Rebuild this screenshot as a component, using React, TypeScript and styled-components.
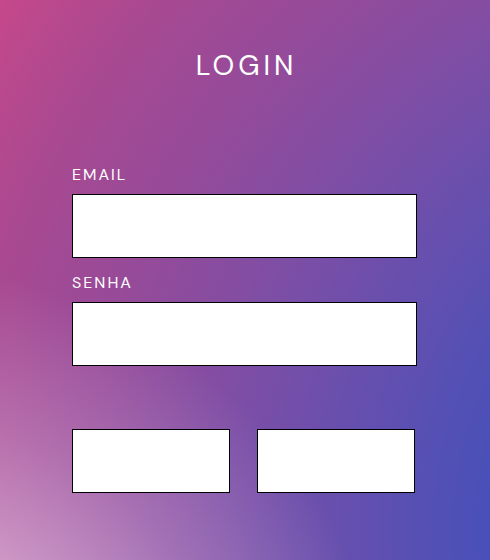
import React from "react";
import styled, { createGlobalStyle } from "styled-components";

const GlobalStyle = createGlobalStyle`
  *, *::before, *::after { box-sizing: border-box; }
  body { margin: 0; font-family: "DM Sans", Inter, "Liberation Sans", sans-serif; }
`;

const Page = styled.main`
  min-height: 100vh;
  padding: 48px 73px 64px 72px;
  color: #fff;
  background:
    radial-gradient(circle at -100px 760px, rgba(255, 240, 255, 0.8) 0, rgba(255, 240, 255, 0.46) 225px, rgba(255, 240, 255, 0.22) 345px, rgba(255, 240, 255, 0) 495px),
    radial-gradient(circle at 800px 530px, #4850b8 310px, #5850b3 390px, #7c4ea6 570px, #924b9b 690px, #a84991 835px, #c5488a 960px);
`;

const Form = styled.form`
  display: flex;
  flex-direction: column;
`;

const Title = styled.h1`
  margin: 0 0 81px;
  font-size: 28px;
  line-height: 36px;
  font-weight: 400;
  letter-spacing: 4px;
  text-indent: 4px;
  text-align: center;
`;

const Field = styled.div`
  display: flex;
  flex-direction: column;
  gap: 9px;
  margin-bottom: 15px;
`;

const Label = styled.label`
  font-size: 16px;
  line-height: 20px;
  font-weight: 400;
  letter-spacing: 2px;
`;

const Input = styled.input`
  width: 100%;
  height: 64px;
  padding: 0 16px;
  border: 1px solid #000;
  border-radius: 0;
  background: #fff;
  font: inherit;
`;

const Actions = styled.div`
  display: grid;
  grid-template-columns: 1fr 1fr;
  gap: 27px;
  margin-top: 48px;
  padding-right: 2px;
`;

const Button = styled.button`
  height: 64px;
  border: 1px solid #000;
  border-radius: 0;
  background: #fff;
`;

export default function App() {
  return (
    <>
      <GlobalStyle />
      <Page>
        <Form>
          <Title>LOGIN</Title>
          <Field>
            <Label htmlFor="email">EMAIL</Label>
            <Input id="email" type="email" />
          </Field>
          <Field>
            <Label htmlFor="senha">SENHA</Label>
            <Input id="senha" type="password" />
          </Field>
          <Actions>
            <Button type="submit" />
            <Button type="button" />
          </Actions>
        </Form>
      </Page>
    </>
  );
}
